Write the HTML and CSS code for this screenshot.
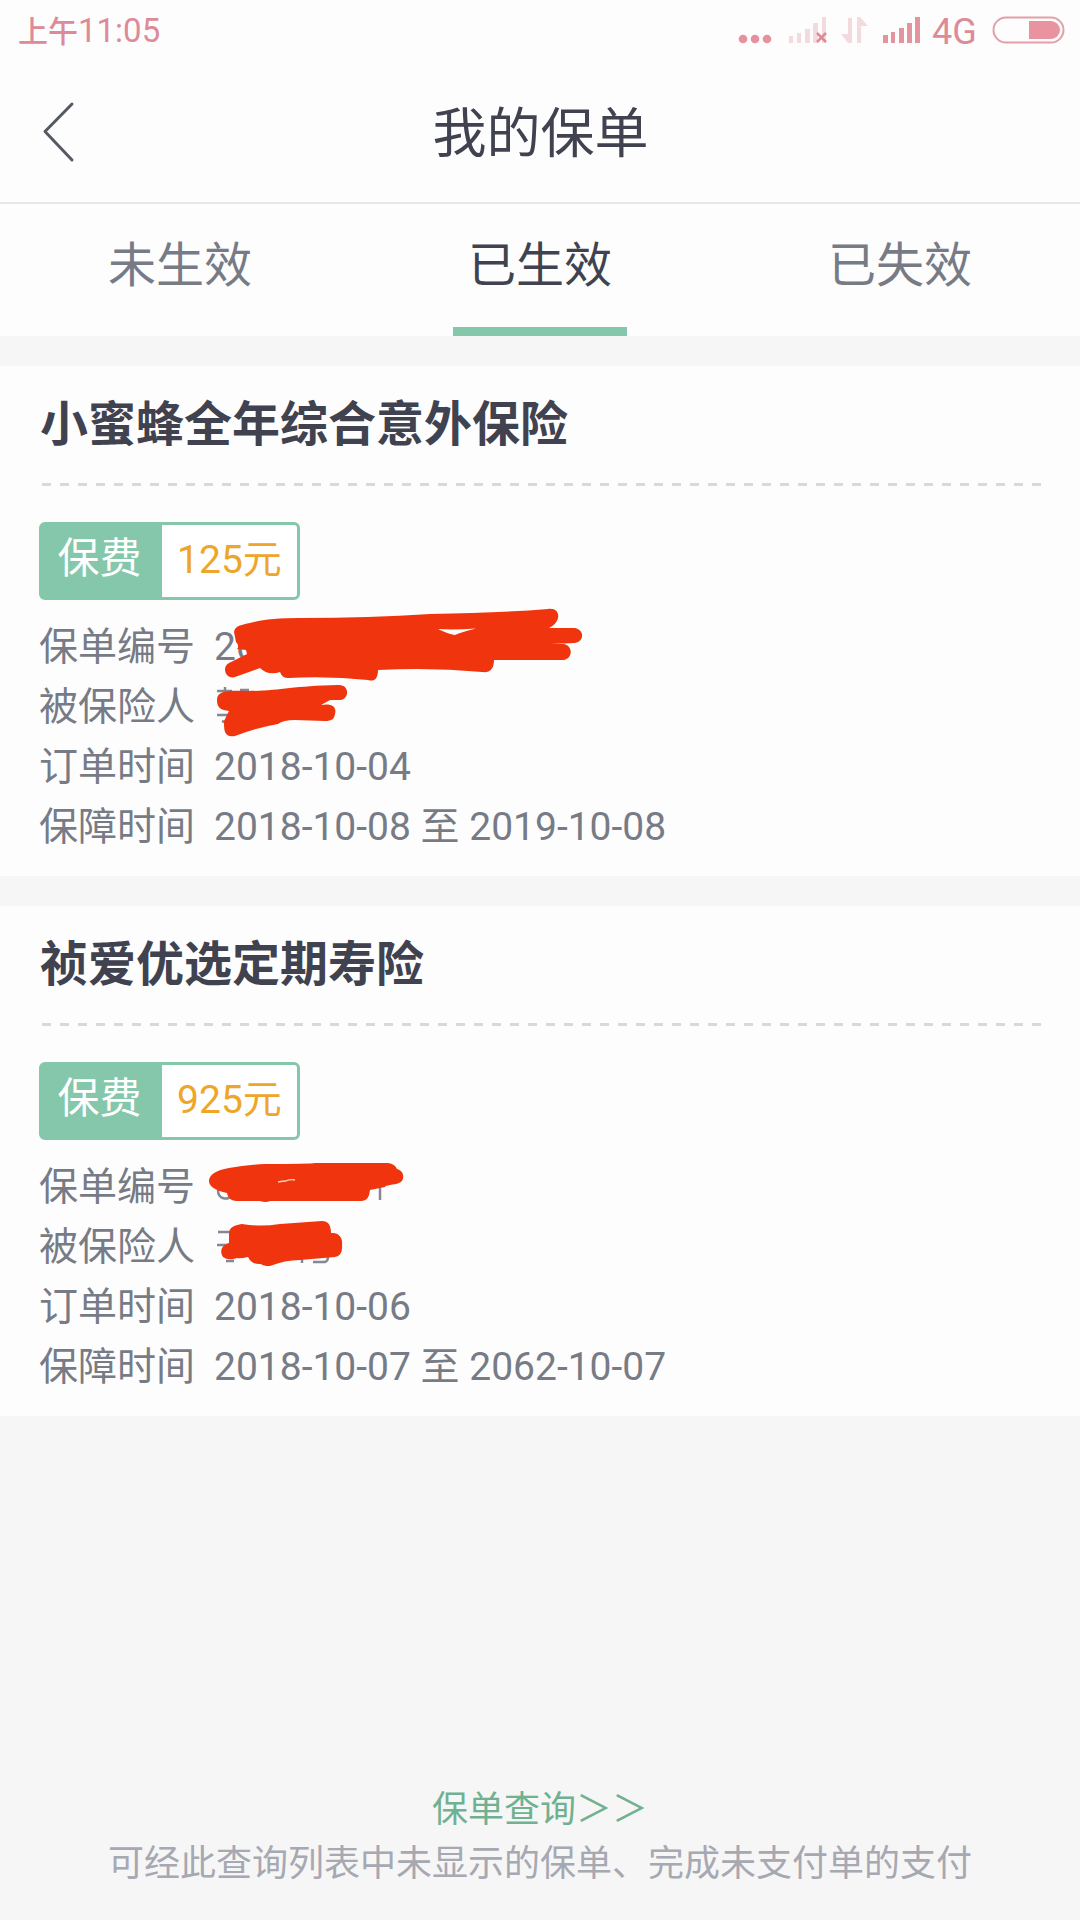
FILE: index.html
```html
<!DOCTYPE html>
<html lang="zh-CN">
<head>
    <meta charset="UTF-8">
    <meta name="viewport" content="width=device-width, initial-scale=1.0">
    <title>我的保单</title>
    <link rel="stylesheet" href="styles.css">
</head>
<body>
    <div class="page">
        <div class="status-bar">
            <div class="time">上午<span>11:05</span></div>
            <div class="status-icons">
                <svg class="signals" width="204" height="60" viewBox="720 0 204 60">
                    <g fill="#e5929d">
                        <circle cx="743" cy="39" r="4.3"/>
                        <circle cx="755" cy="39" r="4.3"/>
                        <circle cx="767" cy="39" r="4.3"/>
                    </g>
                    <path fill="#f4d9dd" d="M789 36h4v7h-4zM797 33h4v10h-4zM805 29h5v14h-5zM813 23h5v20h-5zM822 17h4v26h-4z"/>
                    <path stroke="#dc8b97" stroke-width="2.5" d="M817 33l9 9M826 33l-9 9"/>
                    <path fill="#f2dadd" d="M848 18h4v25h-4l-7-9h7zM857 43V17h3l8 9h-7v17z"/>
                    <path fill="#e3949e" d="M883 35h5v8h-5zM891 32h4v11h-4zM899 28h5v15h-5zM907 23h5v20h-5zM915 17h5v26h-5z"/>
                </svg>
                <span class="network">4G</span>
                <svg class="battery" width="74" height="28" viewBox="0 0 74 28">
                    <rect x="1.5" y="1.5" width="70" height="25" rx="12.5" fill="none" stroke="#e2a0a8" stroke-width="2"/>
                    <path fill="#e8939f" d="M37 5h22a9 9 0 0 1 0 18H37z"/>
                </svg>
            </div>
        </div>

        <div class="header">
            <svg class="back" width="34" height="62" viewBox="0 0 34 62">
                <path d="M31 3L4 30.500L31 59" fill="none" stroke="#555961" stroke-width="3" stroke-linecap="round" stroke-linejoin="round"/>
            </svg>
            <h1>我的保单</h1>
        </div>

        <div class="tabs">
            <div class="tab"><span>未生效</span></div>
            <div class="tab active"><span>已生效</span></div>
            <div class="tab"><span>已失效</span></div>
        </div>

        <div class="card">
            <h2>小蜜蜂全年综合意外保险</h2>
            <div class="divider"></div>
            <div class="fee">
                <span class="fee-label">保费</span>
                <span class="fee-value">125元</span>
            </div>
            <div class="row"><span class="label">保单编号</span><span>20</span></div>
            <div class="row"><span class="label">被保险人</span></div>
            <div class="row"><span class="label">订单时间</span><span>2018-10-04</span></div>
            <div class="row"><span class="label">保障时间</span><span>2018-10-08 至 2019-10-08</span></div>
            <!-- 涂抹遮挡 -->
            <svg class="mask" width="1080" height="510" viewBox="0 366 1080 510">
                <path class="ink" d="M217 691h15M225 687v6M240 690h9M217 715h13M222 721l5 2"/>
                <path class="scribble" d="M234 632C235 625 242 625 254 622Q270 618 300 618Q370 618 430 614Q500 613 548 609C561 607 562 622 549 628H575C585 630 584 642 575 643L551 644H564C573 646 573 658 564 660H494C494 669 490 673 482 672Q430 667 378 670C378 679 374 682 368 680Q330 676 288 678Q282 678 280 672Q268 676 260 668L235 677C226 680 221 667 229 663L247 654L246 650L237 649Q240 646 236 642Z"/>
                <path class="scribble" d="M217 700C217 691 226 690 247 691C280 691 290 686 338 685C350 684 350 700 339 700L330 700L321 705C332 703 337 707 335 714C334 719 332 721 325 721L295 720Q283 720 278 724Q255 728 235 736C224 738 224 730 224 721L229 711C221 710 217 708 217 700Z"/>
                <path class="gap" d="M438 629Q448 634 455 635Q461 632 476 628.500Q454 630 438 629Z"/>
            </svg>
        </div>

        <div class="card">
            <h2>祯爱优选定期寿险</h2>
            <div class="divider"></div>
            <div class="fee">
                <span class="fee-label">保费</span>
                <span class="fee-value">925元</span>
            </div>
            <div class="row"><span class="label">保单编号</span></div>
            <div class="row"><span class="label">被保险人</span></div>
            <div class="row"><span class="label">订单时间</span><span>2018-10-06</span></div>
            <div class="row"><span class="label">保障时间</span><span>2018-10-07 至 2062-10-07</span></div>
            <svg class="mask" width="1080" height="510" viewBox="0 906 1080 510">
                <path class="ink" d="M218 1190C218 1200 228 1200 231 1196M380 1184v16M218 1232h14M217 1245h14M226 1261h8M302 1258v5M313 1262h12q3-1 3-5"/>
                <path class="scribble" d="M209 1181C209 1175 216 1170 229 1168Q245 1165 265 1164Q310 1164 315 1163H388Q395 1164 397 1169C405 1171 405 1181 399 1183C394 1185 385 1185 385 1187L370 1190Q369 1201 362 1201H270Q266 1203 260 1201H236Q228 1200 227 1193Q209 1189 209 1181Z"/>
                <path class="scribble" d="M229 1233C230 1225 238 1225 242 1224Q260 1227 280 1224L322 1221C329 1221 331 1226 331 1233C339 1232 343 1238 342 1245Q343 1256 335 1257L300 1260Q285 1260 270 1266Q263 1266 261 1264Q252 1265 248 1257Q240 1259 237 1258Q228 1261 223 1257C219 1251 222 1245 229 1243Z"/>
                <path d="M278 1182Q283 1181 286 1181Q290 1179 295 1180" fill="none" stroke="#fbd3c9" stroke-width="1.300"/>
            </svg>
        </div>

        <div class="footer">
            <a class="query">保单查询＞＞</a>
            <p>可经此查询列表中未显示的保单、完成未支付单的支付</p>
        </div>
    </div>
</body>
</html>
```
FILE: styles.css
```css
* {
    margin: 0;
    padding: 0;
    box-sizing: border-box;
}

body {
    font-family: Roboto, "Noto Sans CJK SC", sans-serif;
    background: #f6f6f6;
    color: #777b86;
}

.page {
    width: 1080px;
    height: 1920px;
    display: flex;
    flex-direction: column;
    overflow: hidden;
}

/* 状态栏 */
.status-bar {
    height: 60px;
    background: #fdfdfd;
    display: flex;
    justify-content: space-between;
    padding: 0 14px 0 18px;
    color: #dd8b97;
}

.time {
    font-size: 30px;
    font-weight: 500;
    line-height: 62px;
}

.time span {
    font-size: 33px;
    font-weight: 400;
}

.status-icons {
    display: flex;
    align-items: center;
}

.network {
    width: 60px;
    padding-left: 8px;
    font-size: 36px;
    line-height: 60px;
    padding-top: 3px;
}

.battery {
    margin-left: 8px;
}

/* 标题 */
.header {
    height: 144px;
    background: #fdfdfd;
    border-bottom: 2px solid #e7e7e9;
    display: flex;
    align-items: center;
    padding: 0 74px 0 41px;
}

.back {
    margin-top: 1px;
}

.header h1 {
    flex: 1;
    padding-top: 8px;
    text-align: center;
    font-size: 54px;
    font-weight: 400;
    line-height: 80px;
    color: #40434f;
}

.tabs {
    height: 132px;
    background: #fdfdfd;
    display: flex;
    flex-shrink: 0;
}

.tab {
    flex: 1;
    display: flex;
    justify-content: center;
    font-size: 48px;
}

.tab span {
    width: 174px;
    height: 132px;
    line-height: 124px;
    text-align: center;
}

.tab.active span {
    color: #40434f;
    border-bottom: 9px solid #84c7aa;
}

/* 保单卡片 */
.card {
    position: relative;
    height: 510px;
    margin-top: 30px;
    padding: 0 39px;
    background: #fdfdfd;
    flex-shrink: 0;
}

.card h2 {
    height: 117px;
    padding-left: 1px;
    font-size: 48px;
    font-weight: 700;
    line-height: 118px;
    color: #40434f;
}

.divider {
    height: 3px;
    background: repeating-linear-gradient(90deg, #d9d9dc 0, #d9d9dc 9px, transparent 9px, transparent 18px) 3px 0;
}

.fee {
    display: flex;
    width: 261px;
    height: 78px;
    margin: 36px 0 16px;
    border: 3px solid #84c7aa;
    border-radius: 6px;
    background: #fff;
}

.fee-label {
    width: 120px;
    padding-right: 5px;
    background: #84c7aa;
    color: #fff;
    font-size: 42px;
    line-height: 68px;
    text-align: center;
}

.fee-value {
    flex: 1;
    color: #eda62a;
    font-size: 39px;
    line-height: 70px;
    text-align: center;
}

.row {
    display: flex;
    height: 60px;
    font-size: 39px;
    line-height: 62px;
}

.label {
    width: 175px;
}

.mask {
    position: absolute;
    top: 0;
    left: 0;
}

.scribble {
    fill: #f0350e;
}

.gap {
    fill: #fdfdfd;
}

.ink {
    fill: none;
    stroke: #858893;
    stroke-width: 2.5;
}

/* 底部 */
.footer {
    margin-top: auto;
    padding-bottom: 29px;
    text-align: center;
    font-size: 36px;
    line-height: 54px;
    color: #a6a8b2;
}

.query {
    color: #6fb191;
}
```
